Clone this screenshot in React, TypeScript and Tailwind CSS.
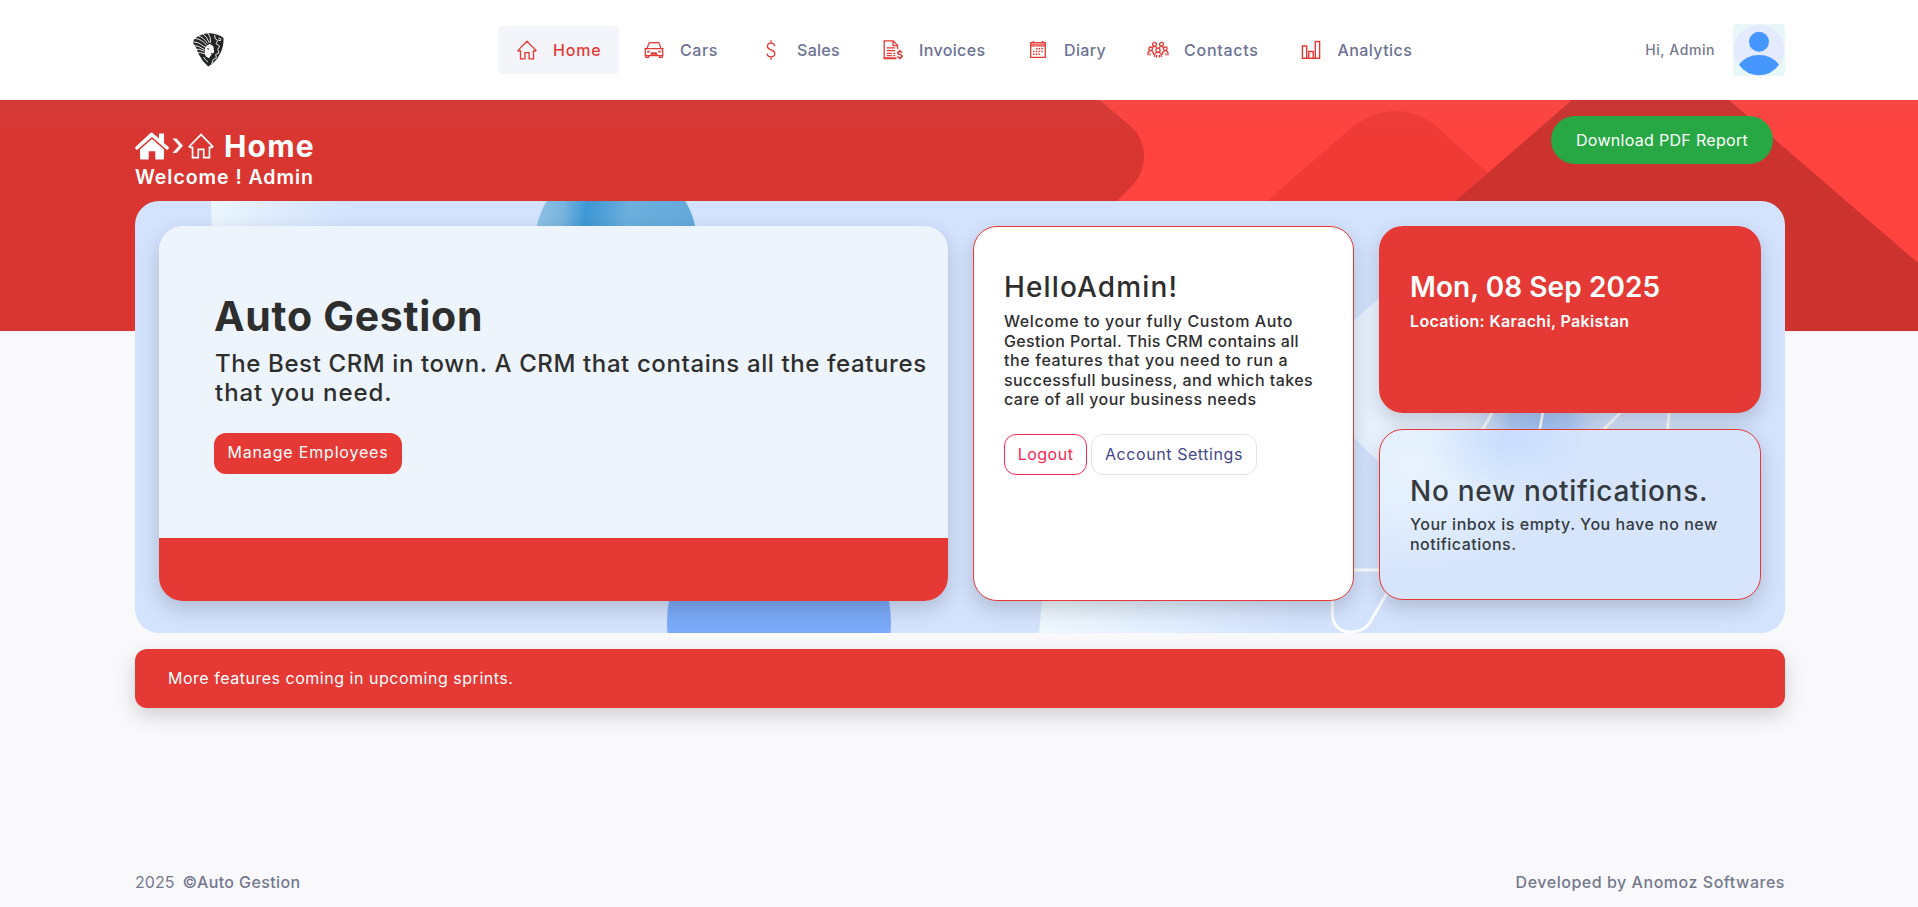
import React from "react";

type IconProps = { className?: string };

const HomeIcon = ({ className = "" }: IconProps) => (
  <svg viewBox="0 0 20 20" className={className} fill="none" stroke="currentColor" strokeWidth="1.3" strokeLinejoin="miter">
    <path d="M1 10.4 10 1.2l9 9.2-.6.6h-1.9v7.9h-4.4v-6.3H7.9v6.3H3.5V11H1.6z" />
  </svg>
);

const CarIcon = () => (
  <svg viewBox="0 0 20 20" className="size-5" fill="none" stroke="currentColor" strokeWidth="1.3">
    <path d="M3 8.600 4.800 3.600Q5.100 2.700 6 2.700h8q.9 0 1.200.9L17 8.600M.4 8.600h19.200M2.400 8.800Q1.300 9.500 1.300 11v4.600h17.400V11q0-1.500-1.100-2.200" />
    <path d="M1.800 15.600v1.800h2.700v-1.800M15.500 15.600v1.800h2.700v-1.800M7.200 12.900h5.600M6.600 15.400l.8-1.200h5.200l.8 1.200" />
    <path d="M3.300 11.600h2.400M14.300 11.600h2.400" strokeWidth="1.900" />
  </svg>
);

const DollarIcon = () => (
  <svg viewBox="0 0 20 20" className="size-5" fill="none" stroke="currentColor" strokeWidth="1.3">
    <path d="M10 .3v2.900M10 16.800v2.900M13.700 6.300C13.500 4.300 12.200 3.100 10 3.100S6.400 4.400 6.400 6.300c0 4.400 7.400 2.900 7.400 7.300 0 1.900-1.500 3.200-3.800 3.200s-3.700-1.300-3.800-3.300" />
  </svg>
);

const InvoiceIcon = () => (
  <svg viewBox="0 0 20 20" className="size-5" fill="none" stroke="currentColor" strokeWidth="1.3">
    <path d="M14.600 9V5.400L10.200.9H1.200v17.800h12.200M10 1v4.700h4.600M3.800 7.800h8.400M3.800 10.600h8.400M3.800 13.300h5M10.300 13.300h2M3.800 15.700h5M10.300 15.700h2M1 18h12.400" />
    <path d="M16.800 9.800v1.500M16.800 17.800v1.700M19 12.700c-.3-.8-1.100-1.200-2.200-1.200s-2 .6-2 1.500c0 2.100 4.300 1 4.300 3.100 0 1-.9 1.600-2.200 1.600s-2.200-.5-2.400-1.400" strokeWidth="1.600" />
  </svg>
);

const DiaryIcon = () => (
  <svg viewBox="0 0 20 20" className="size-5" fill="none" stroke="currentColor" strokeWidth="1.3">
    <path d="M2.700 2.600h14.600v14.700H2.700zM2.700 5.900h14.600M5.400 1v2.500M14.600 1v2.500" />
    <path d="M8 8.800h7.200M5 11.500h10.200M5 14.200h7.400" strokeDasharray="1.500 1.200" strokeWidth="1.500" />
    <path d="M2.700 4.200h14.600" strokeWidth="1" />
  </svg>
);

const ContactsIcon = () => (
  <svg viewBox="0 0 22 20" className="h-5 w-[22px]" fill="none" stroke="currentColor" strokeWidth="1.3">
    <circle cx="7.500" cy="4.200" r="1.900" />
    <circle cx="14.500" cy="4.200" r="1.900" />
    <circle cx="3.700" cy="8.800" r="1.800" />
    <circle cx="18.300" cy="8.800" r="1.800" />
    <circle cx="11" cy="10.200" r="2.100" />
    <path d="M1 15.200v-1.500q0-3 2.700-3t2.700 3v1M21 15.200v-1.500q0-3-2.700-3t-2.700 3v1M7.700 17v-1.800q0-2.900 3.300-2.900t3.300 2.900V17M5.500 8q.5-1.600 2-1.600T10 8M12 8q1-1.600 2.500-1.600t2 1.600M3 13.500v2M19 13.500v2M9.600 15v2.500M12.400 15v2.500" />
  </svg>
);

const AnalyticsIcon = () => (
  <svg viewBox="0 0 20 20" className="size-5" fill="none" stroke="currentColor" strokeWidth="1.4">
    <path d="M1.400 6h4.300v12.200H1.400zM7.800 11.500h4.400v6.700H7.800zM14.300 1.500h4.300v16.700h-4.300zM.8 18.200h18.400" />
  </svg>
);

const SolidHouse = () => (
  <svg viewBox="0 0 34 28" className="h-[28px] w-[34px]" fill="currentColor">
    <path d="M17 .5 24 6.600V1.600h5v9.300l4.600 4c.5.5.5 1 .1 1.500l-.9 1c-.4.4-.9.4-1.400 0L17 4.900 2.600 17.400c-.5.4-1 .4-1.400 0l-.9-1c-.4-.5-.4-1 .1-1.500L15.500 1.100Q17-.2 18 1.200z" />
    <path d="M17 7.100 29 17.500v8.800q0 1.200-1.200 1.200h-7.500v-8.200h-6.600v8.200H6.200Q5 27.500 5 26.300v-8.800z" />
  </svg>
);

const LionLogo = () => (
  <svg viewBox="0 0 32 34" className="h-[34px] w-[32px]">
    <path d="M.8 9.500Q2 5 6.500 3 12 0 18 .3q8 .5 13.500 4.700Q32 13 28.200 20.500 24 29 16.200 33.600 10 28 6.600 21 5 15 .8 9.500z" fill="#232426" />
    <path d="M12.500 20.500 13.200 14l4.300-3.200 3.800 2.400.9 6-3 2.800-2.200 3.200-2.800-1.400z" fill="#fff" />
    <g stroke="#fff" strokeWidth="0.9" fill="none">
      <path d="M0 8.500q7 .3 13 5.500M.5 12.300q6.500.2 12 4.300M2.500 5.300q7.500.8 12 7M6 2.800q6 1.700 9.300 7.700M10.500.8q4.500 2.600 6.800 9M16 .2q3 3.800 2.600 9.600M2.800 16.200q4.500-.6 9.300 2M5 19.800q3.500-.8 7.500 1" />
      <path d="M22.500 2l.8 3.800 2.400 1.600-1.600 3.300 3.500 2.300-1.900 3.600 1.300 3.400-3.300 1.500.7 3.300-3.200 1.700-1.500 4.500" />
      <path d="M26.500 5q2.800.2 2.500 2t-2.800-.2M11.500 24q2 3.500 4.500 5" />
    </g>
    <path d="M14.800 15l2.400.8-.9 1.100zM18.500 20.500l2.600-.8-1.700 1.900z" fill="#232426" />
  </svg>
);

const Avatar = () => (
  <svg viewBox="0 0 52 52" className="size-[52px] rounded-[4px] bg-[#e8f7f7]">
    <circle cx="26" cy="26" r="25.200" fill="#e4eaff" />
    <circle cx="26" cy="17.800" r="10" fill="#4596ff" />
    <path d="M6 40.800Q13 31 26 31t20 9.800Q38.500 51.200 26 51.200T6 40.800z" fill="#4596ff" />
  </svg>
);

const HeaderShapes = () => (
  <svg viewBox="0 0 1918 231" preserveAspectRatio="none" className="absolute inset-x-0 top-0 h-[231px] w-full">
    <defs>
      <linearGradient id="navShade" x1="0" y1="0" x2="0" y2="1">
        <stop offset="0" stopColor="#82829a" stopOpacity="0.060" />
        <stop offset="1" stopColor="#82829a" stopOpacity="0" />
      </linearGradient>
    </defs>
    <path d="M0 0h1918v231H0z" fill="#ff433f" />
    <path d="M0 0h1099.500l32 27Q1144 39 1144 56t-12 30l-15 15-150 130H0z" fill="#d93632" />
    <path d="M1232 131 1267 101l82-71Q1371 11 1395 11t43 17l50 45 160 158H1232z" fill="#f03a36" />
    <path d="M1421 131 1572 0h157l189 163v68H1380z" fill="#cc322e" />
    <path d="M0 0h1918v36H0z" fill="url(#navShade)" />
  </svg>
);

const PanelShapes = () => (
  <svg viewBox="0 0 1650 432" className="absolute inset-0 h-[432px] w-[1650px]">
    <defs>
      <linearGradient id="paleTop" x1="0" x2="1">
        <stop offset="0" stopColor="#ebf6fe" />
        <stop offset="0.35" stopColor="#e0edfd" />
        <stop offset="1" stopColor="#d3e2fd" />
      </linearGradient>
      <linearGradient id="ball" x1="0" x2="1" y2="0.100">
        <stop offset="0.050" stopColor="#8cc1e4" />
        <stop offset="0.200" stopColor="#78b4df" />
        <stop offset="0.340" stopColor="#3f98d6" />
        <stop offset="0.420" stopColor="#4a9dd7" />
        <stop offset="0.600" stopColor="#6cafdd" />
        <stop offset="0.950" stopColor="#65aadb" />
      </linearGradient>
      <linearGradient id="paleMid" x1="0" x2="1">
        <stop offset="0" stopColor="#eff7fd" />
        <stop offset="0.500" stopColor="#e1eefe" />
        <stop offset="1" stopColor="#d3e2fd" />
      </linearGradient>
      <linearGradient id="facet" x1="0" x2="1">
        <stop offset="0" stopColor="#e8f1fe" />
        <stop offset="0.400" stopColor="#e8f1fe" />
        <stop offset="1" stopColor="#d3e2fd" />
      </linearGradient>
      <radialGradient id="glow">
        <stop offset="0" stopColor="#a4c6f9" />
        <stop offset="0.400" stopColor="#b0cdfa" />
        <stop offset="1" stopColor="#d3e2fd" stopOpacity="0" />
      </radialGradient>
    </defs>
    <path d="M76 0h145v40H79Q76 20 76 0z" fill="url(#paleTop)" />
    <circle cx="481" cy="42" r="81" fill="url(#ball)" />
    <circle cx="644" cy="421" r="112" fill="#7aaaf8" />
    <path d="M908 390h260v42H904z" fill="url(#paleMid)" />
    <path d="M1300 45l-130 120v25l120 115 150-60v-70z" fill="url(#facet)" />
    <ellipse cx="1405" cy="222" rx="75" ry="42" fill="url(#glow)" />
    <g fill="none" stroke="#fbfdff" strokeWidth="2.800">
      <path d="M1361 205l-16 28M1409 205l-5 28M1492 205l-26 26M1535 205l-3 28" />
      <path d="M1210 369h50M1197.500 395v20q2 15 17 16 14 0 20-9l24-41" />
    </g>
  </svg>
);

const nav = [
  { label: "Home", icon: <HomeIcon className="size-5" />, width: "w-[48px] tracking-[0.78px]" },
  { label: "Cars", icon: <CarIcon />, width: "w-[38px] tracking-[0.59px]" },
  { label: "Sales", icon: <DollarIcon />, width: "w-[43px] tracking-[0.3px]" },
  { label: "Invoices", icon: <InvoiceIcon />, width: "w-[66px] tracking-[0.36px]" },
  { label: "Diary", icon: <DiaryIcon />, width: "w-[41px] tracking-[0.34px]" },
  { label: "Contacts", icon: <ContactsIcon />, width: "w-[74.500px] tracking-[0.74px]" },
  { label: "Analytics", icon: <AnalyticsIcon />, width: "w-[75px] tracking-[0.41px]" },
];

const cardShadow = "shadow-[0_8px_20px_rgba(0,0,0,0.17)]";

export default function App() {
  return (
    <div className="flex h-[907px] flex-col overflow-hidden whitespace-nowrap bg-[#f9f9fb] font-['Inter',sans-serif] text-base text-[#2e2e2e]">
      <header className="flex h-[100px] shrink-0 items-center bg-white pr-[133px] pl-[135px]">
        <div className="w-[363px] pl-[57px]">
          <LionLogo />
        </div>
        <nav className="flex gap-[6px]">
          {nav.map((item, i) => (
            <a
              key={item.label}
              className={`flex h-12 items-center rounded-[4px] pr-[18px] pb-px font-medium ${i === 0 ? "bg-[#f4f5fb] text-[#e53935]" : "text-[#6c7293]"}`}
            >
              <span className="flex w-[55px] justify-center pl-[2px] text-[#e53935]">{item.icon}</span>
              <span className={item.width}>{item.label}</span>
            </a>
          ))}
        </nav>
        <div className="ml-auto flex items-center gap-[18px]">
          <span className="pb-px text-sm font-medium tracking-[0.57px] text-[#74788d]">Hi, Admin</span>
          <Avatar />
        </div>
      </header>

      <main className="relative pr-[133px] pl-[135px]">
        <HeaderShapes />
        <div className="relative flex h-[101px] items-start justify-between pr-3 text-white">
          <div className="pt-7">
            <h1 className="flex h-9 items-center text-[30px] leading-9 font-bold">
              <SolidHouse />
              <svg viewBox="0 0 13 16" className="ml-[3px] h-4 w-[13px]" fill="currentColor">
                <path d="M.5.500h4l6.500 7.200-6.500 7.300h-4L7 7.700z" />
              </svg>
              <HomeIcon className="ml-[3px] size-[26px]" />
              <span className="ml-[10px] tracking-[1.2px]">Home</span>
            </h1>
            <p className="mt-px text-[19.500px] leading-6 font-semibold tracking-[0.95px]">Welcome ! Admin</p>
          </div>
          <button className="mt-4 h-12 w-[222px] rounded-full bg-[#28a745] pb-px tracking-[0.3px]">Download PDF Report</button>
        </div>

        <section className="relative flex h-[432px] gap-[25px] overflow-hidden rounded-[24px] bg-[#d3e2fd] px-6 pt-[25px]">
          <PanelShapes />
          <article className={`relative flex h-[375px] w-[789px] flex-col rounded-[24px] ${cardShadow}`}>
            <div className="h-[312px] rounded-t-[24px] bg-[#edf4fb] pt-[66px] pl-[55px]">
              <h2 className="text-[41px] leading-[48px] font-bold tracking-[0.72px]">Auto Gestion</h2>
              <p className="mt-[10px] pl-px text-2xl leading-[28.800px] font-medium">
                <span className="block tracking-[0.61px]">The Best CRM in town. A CRM that contains all the features</span>
                <span className="block tracking-[0.95px]">that you need.</span>
              </p>
              <button className="mt-[25px] h-[41px] w-[188px] rounded-[12px] bg-[#e53935] pb-[2px] tracking-[0.82px] text-white">Manage Employees</button>
            </div>
            <div className="flex-1 rounded-b-[24px] bg-[#e53935]" />
          </article>

          <article className={`relative h-[375px] w-[381px] rounded-[24px] border border-[#e53935] bg-white pt-11 pl-[30px] ${cardShadow}`}>
            <h3 className="text-[28px] leading-8 font-medium tracking-[1.14px]">HelloAdmin!</h3>
            <p className="mt-[9px] leading-[19.500px] font-medium">
              <span className="block tracking-[0.58px]">Welcome to your fully Custom Auto</span>
              <span className="block tracking-[0.36px]">Gestion Portal. This CRM contains all</span>
              <span className="block tracking-[0.6px]">the features that you need to run a</span>
              <span className="block tracking-[0.44px]">successfull business, and which takes</span>
              <span className="block tracking-[0.48px]">care of all your business needs</span>
            </p>
            <div className="mt-[24.500px] flex gap-1">
              <button className="h-[41px] w-[83px] rounded-[12px] border border-[#fd2754] pb-[2px] tracking-[0.5px] text-[#fd2754]">Logout</button>
              <button className="h-[41px] w-[166px] rounded-[12px] border border-[#e2e2f0] pb-[2px] tracking-[0.57px] text-[#45478a]">Account Settings</button>
            </div>
          </article>

          <div className="relative flex w-[382px] flex-col gap-4">
            <article className={`h-[187px] rounded-[24px] bg-[#e53935] pt-[45px] pl-[31px] text-white ${cardShadow}`}>
              <h3 className="text-[28px] leading-8 font-semibold tracking-[0.06px]">Mon, 08 Sep 2025</h3>
              <p className="mt-[9px] leading-[19.500px] font-semibold tracking-[0.35px]">Location: Karachi, Pakistan</p>
            </article>
            <article
              className={`h-[171px] rounded-[24px] border border-[#e53935] bg-[#d7e5fc] bg-[radial-gradient(ellipse_80px_60px_at_130px_8px,#c8dcfd,transparent),radial-gradient(ellipse_150px_110px_at_30px_35px,#e8f2fe,#e3effd_40%,transparent)] pt-[45px] pl-[30px] text-[#343a40] ${cardShadow}`}
            >
              <h3 className="text-[28px] leading-8 font-medium tracking-[0.7px]">No new notifications.</h3>
              <p className="mt-[8px] leading-[19.500px] font-medium">
                <span className="block tracking-[0.52px]">Your inbox is empty. You have no new</span>
                <span className="block tracking-[0.49px]">notifications.</span>
              </p>
            </article>
          </div>
        </section>

        <div className={`relative mt-4 flex h-[59px] items-center rounded-[12px] bg-[#e53935] pb-[2px] pl-[33px] tracking-[0.52px] text-white ${cardShadow}`}>
          More features coming in upcoming sprints.
        </div>
      </main>

      <footer className="mt-auto flex justify-between pr-[133px] pb-[13px] pl-[135px] leading-6 font-medium text-[#74788d]">
        <div className="flex gap-[8px]">
          <span className="font-normal tracking-[0.05px]">2025</span>
          <span className="tracking-[0.38px]">©Auto Gestion</span>
        </div>
        <span className="tracking-[0.53px]">Developed by Anomoz Softwares</span>
      </footer>
    </div>
  );
}
